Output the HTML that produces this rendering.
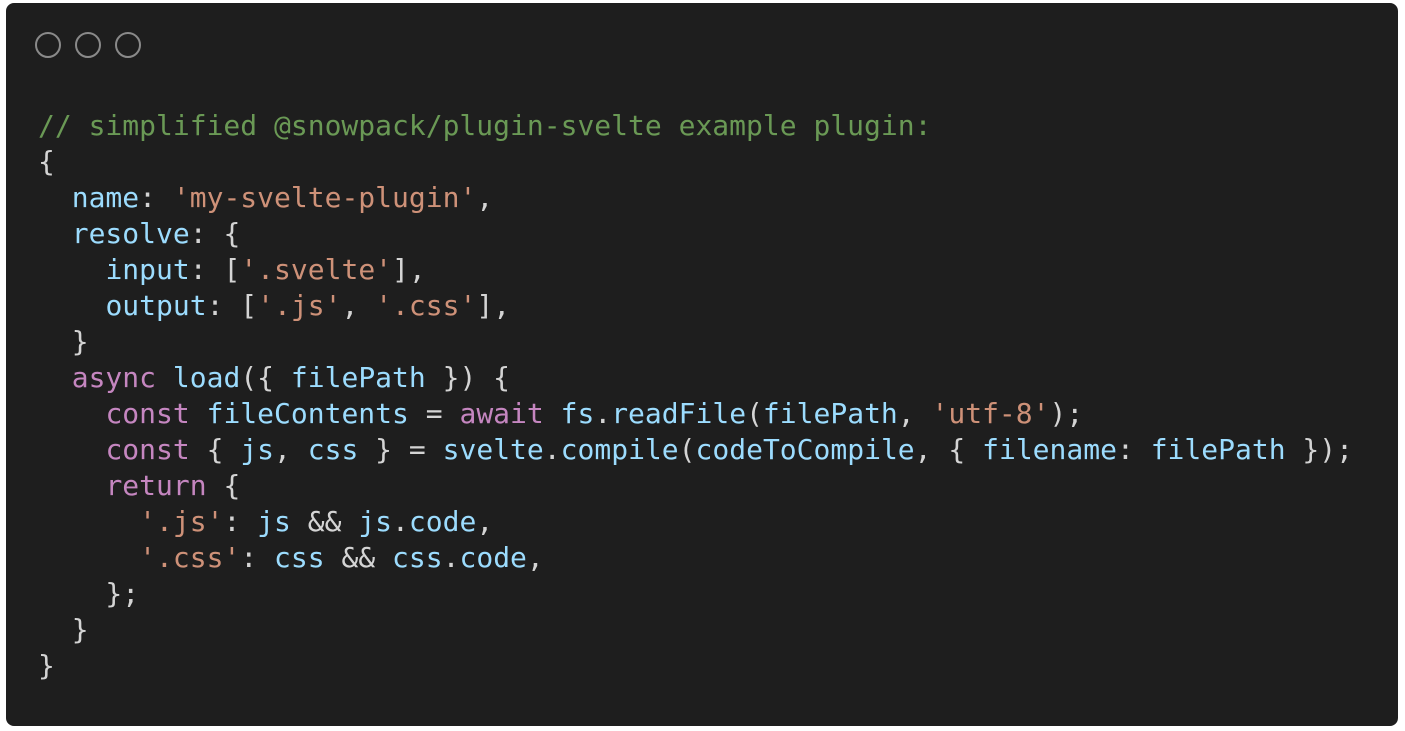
<!DOCTYPE html>
<html><head><style>
html,body{margin:0;padding:0;background:#fff;width:1405px;height:731px;overflow:hidden}
.box{position:absolute;left:6px;top:3px;width:1392px;height:723px;background:#1e1e1e;border-radius:8px}
.c{position:absolute;top:32px;width:26px;height:26px;border:2px solid #8a8a8a;border-radius:50%;box-sizing:border-box}
pre{position:absolute;left:38px;top:108px;margin:0;font-family:"DejaVu Sans Mono","Liberation Mono",monospace;font-size:28px;line-height:36px;color:#d4d4d4}
.cm{color:#6a9955}.k{color:#c586c0}.v{color:#9cdcfe}.s{color:#ce9178}
</style></head><body>
<div class="box"></div>
<div class="c" style="left:35px"></div>
<div class="c" style="left:75px"></div>
<div class="c" style="left:115px"></div>
<pre><span class="cm">// simplified @snowpack/plugin-svelte example plugin:</span>
{
  <span class="v">name</span>: <span class="s">'my-svelte-plugin'</span>,
  <span class="v">resolve</span>: {
    <span class="v">input</span>: [<span class="s">'.svelte'</span>],
    <span class="v">output</span>: [<span class="s">'.js'</span>, <span class="s">'.css'</span>],
  }
  <span class="k">async</span> <span class="v">load</span>({ <span class="v">filePath</span> }) {
    <span class="k">const</span> <span class="v">fileContents</span> = <span class="k">await</span> <span class="v">fs</span>.<span class="v">readFile</span>(<span class="v">filePath</span>, <span class="s">'utf-8'</span>);
    <span class="k">const</span> { <span class="v">js</span>, <span class="v">css</span> } = <span class="v">svelte</span>.<span class="v">compile</span>(<span class="v">codeToCompile</span>, { <span class="v">filename</span>: <span class="v">filePath</span> });
    <span class="k">return</span> {
      <span class="s">'.js'</span>: <span class="v">js</span> &amp;&amp; <span class="v">js</span>.<span class="v">code</span>,
      <span class="s">'.css'</span>: <span class="v">css</span> &amp;&amp; <span class="v">css</span>.<span class="v">code</span>,
    };
  }
}</pre>
</body></html>
